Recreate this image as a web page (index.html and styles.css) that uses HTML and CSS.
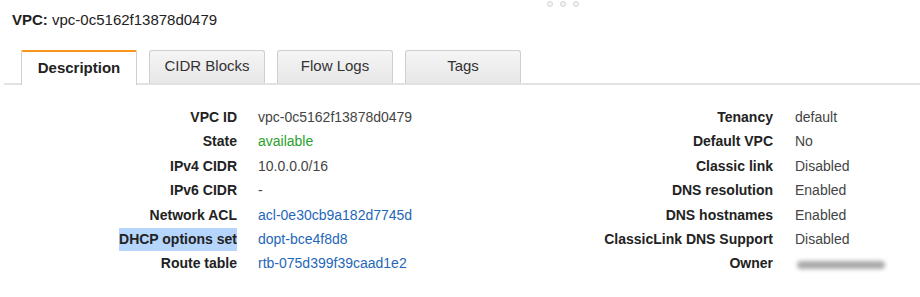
FILE: index.html
```html
<!DOCTYPE html>
<html>
<head>
  <title>VPC details</title>
  <link rel="stylesheet" href="styles.css">
</head>
<body>

  <!-- pane resize grip -->
  <div class="grip"><i></i><i></i><i></i></div>

  <div class="heading"><b>VPC:</b> vpc-0c5162f13878d0479</div>

  <!-- Tabs -->
  <div class="tabs">
    <div class="tab active">Description</div>
    <div class="tab">CIDR Blocks</div>
    <div class="tab">Flow Logs</div>
    <div class="tab">Tags</div>
  </div>

  <!-- Description panel -->
  <div class="details">
    <div class="props left">
      <div class="lbl">VPC ID</div>        <div class="val">vpc-0c5162f13878d0479</div>
      <div class="lbl">State</div>         <div class="val ok">available</div>
      <div class="lbl">IPv4 CIDR</div>     <div class="val">10.0.0.0/16</div>
      <div class="lbl">IPv6 CIDR</div>     <div class="val">-</div>
      <div class="lbl">Network ACL</div>   <div class="val"><a href="#">acl-0e30cb9a182d7745d</a></div>
      <div class="lbl"><span class="sel">DHCP options set</span></div>
                                           <div class="val"><a href="#">dopt-bce4f8d8</a></div>
      <div class="lbl">Route table</div>   <div class="val"><a href="#">rtb-075d399f39caad1e2</a></div>
    </div>

    <div class="props right">
      <div class="lbl">Tenancy</div>                <div class="val">default</div>
      <div class="lbl">Default VPC</div>            <div class="val">No</div>
      <div class="lbl">Classic link</div>           <div class="val">Disabled</div>
      <div class="lbl">DNS resolution</div>         <div class="val">Enabled</div>
      <div class="lbl">DNS hostnames</div>          <div class="val">Enabled</div>
      <div class="lbl">ClassicLink DNS Support</div><div class="val">Disabled</div>
      <div class="lbl">Owner</div>                  <div class="val"><span class="blurred"></span></div>
    </div>
  </div>

</body>
</html>
```

FILE: styles.css
```css
body      { margin: 0; font-family: "Liberation Sans", Arial, sans-serif; color: #333; background: #fff; }

/* little grip dots at the top of the split pane */
.grip     { position: absolute; top: 1px; left: 547px; display: flex; gap: 7px; }
.grip i   { width: 4px; height: 4px; border: 1px solid #d4d4d4; border-radius: 50%; background: #f4f4f4; }

.heading  { padding: 11px 0 0 12px; font-size: 15px; line-height: 18px; color: #222; }
.heading b { font-weight: bold; }

/* tab strip */
.tabs     {
  display: flex; align-items: flex-end; gap: 12px;
  margin: 21px 0 0 4px; padding-left: 17px;
  border-bottom: 2px solid #e2e2e2;
}
.tab      {
  width: 116px; box-sizing: border-box; text-align: center;
  font-size: 15px; line-height: 18px; padding: 6px 0 8px;
  border: 1px solid #cfcfcf; border-bottom: 0; border-radius: 3px 3px 0 0;
  background: linear-gradient(#f5f5f5, #e7e7e7);
  color: #333;
}
.tab.active {
  background: #fff; font-weight: bold; color: #222;
  border-top: 2px solid #f7981d; border-radius: 2px 2px 0 0;
  padding: 7px 0 8px; margin-bottom: -2px;
}

/* property tables */
.details  { display: flex; padding-top: 20px; font-size: 14px; }
.props    { display: grid; grid-auto-rows: 24.4px; line-height: 24.4px; }
.props.left  { width: 510px; grid-template-columns: 237px 1fr; column-gap: 21px; }
.props.right { flex: 1; grid-template-columns: 263px 1fr; column-gap: 22px; }

.lbl      { text-align: right; font-weight: bold; color: #222; white-space: nowrap; }
.val      { color: #444; white-space: nowrap; }
.val a    { color: #1f67b9; text-decoration: none; }
.val.ok   { color: #2b9f2b; }

.sel      { background: #b5d5fc; padding: 3px 0 4px; }
.blurred  {
  display: inline-block; width: 88px; height: 8px; margin-left: 2px; vertical-align: -1px;
  background: #a9a9a9; border-radius: 4px; filter: blur(2px);
}
```
